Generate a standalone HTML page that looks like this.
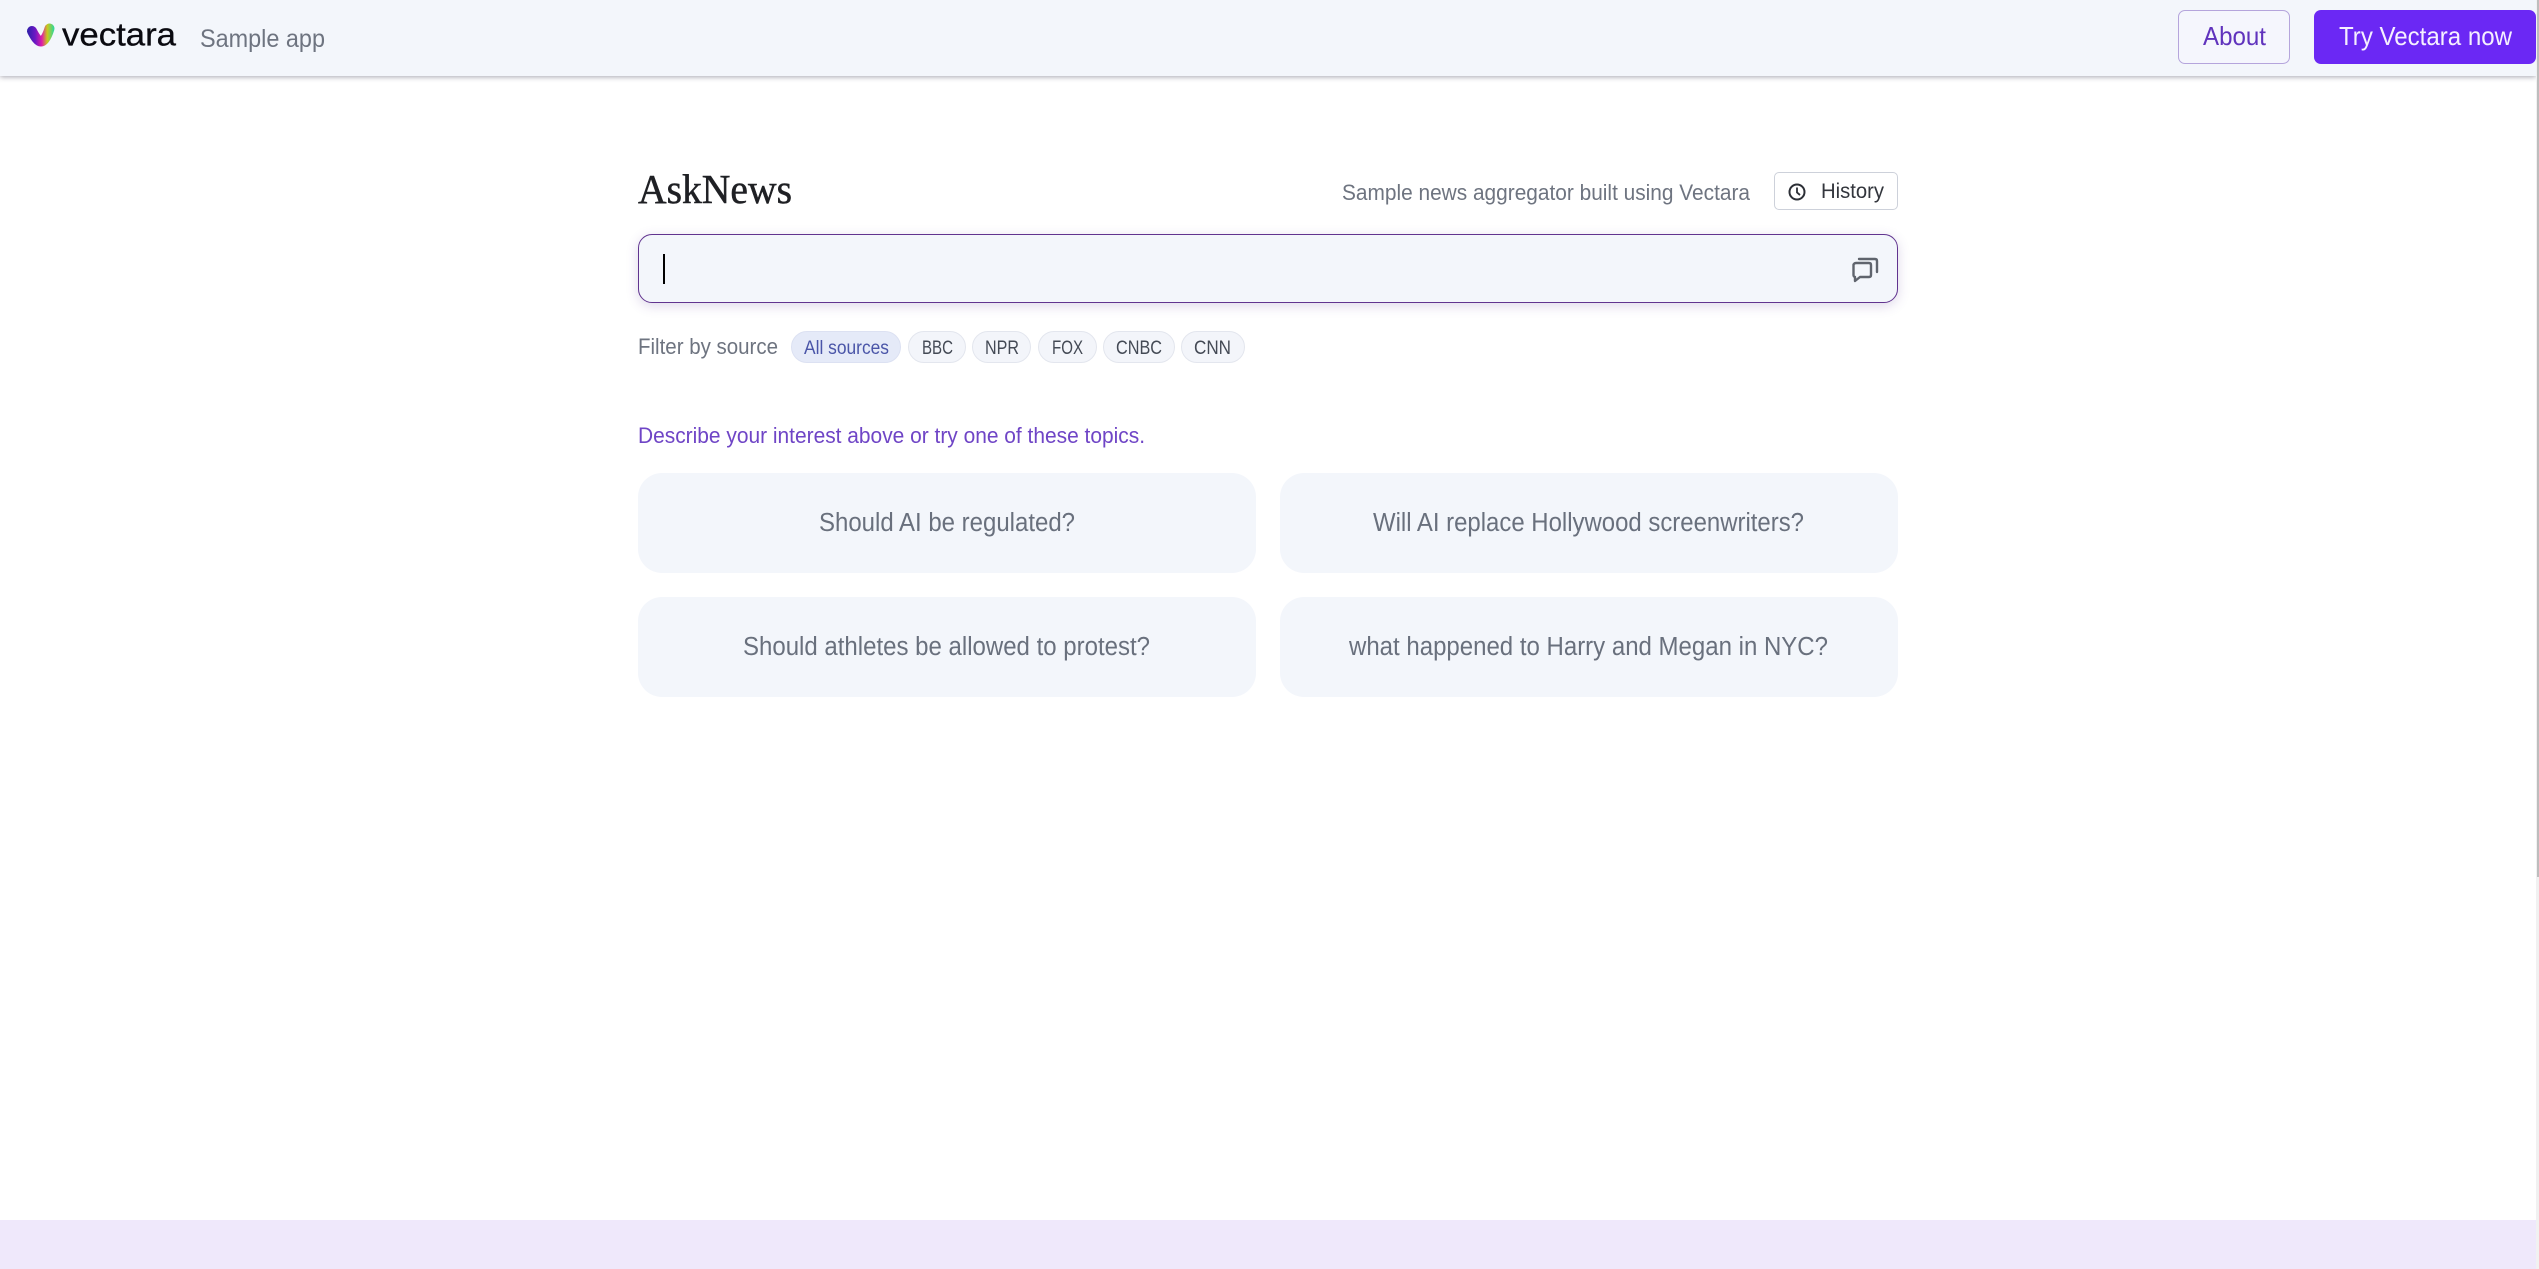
<!DOCTYPE html>
<html lang="en">
<head>
<meta charset="utf-8">
<title>AskNews</title>
<style>
html,body{margin:0;padding:0;width:2539px;height:1269px;overflow:hidden;background:#fff}
.b{position:absolute;box-sizing:border-box}
svg{position:absolute;left:0;top:0}
text{font-family:"Liberation Sans",Arial,sans-serif}
</style>
</head>
<body>
<div class="b" style="left:0;top:0;width:2536px;height:76px;background:#f3f6fb;box-shadow:0 1px 5px rgba(60,60,80,.45)"></div>
<div class="b" style="left:0;top:1220px;width:2536px;height:49px;background:#efe8fb"></div>
<div class="b" style="left:2536px;top:0;width:3px;height:1269px;background:#f1f1f1"></div>
<div class="b" style="left:2537px;top:0;width:2px;height:877px;background:#bdbdbd"></div>

<div class="b" style="left:2178px;top:10px;width:112px;height:54px;background:#f5f6fd;border:1px solid #b5a5dc;border-radius:7px"></div>
<div class="b" style="left:2314px;top:10px;width:222px;height:54px;background:#6b28f4;border-radius:7px"></div>

<div class="b" style="left:1774px;top:172px;width:124px;height:38px;background:#fff;border:1px solid #cdd1da;border-radius:5px"></div>
<div class="b" style="left:638px;top:234px;width:1260px;height:69px;background:#f3f6fb;border:1px solid #61348f;border-radius:14px;box-shadow:0 3px 12px rgba(90,60,150,.2)"></div>
<div class="b" style="left:663px;top:254px;width:2px;height:30px;background:#000"></div>

<div class="b" style="left:791px;top:331px;width:110px;height:32px;background:#e5eaf8;border:1px solid #dce1f2;border-radius:16px"></div>
<div class="b" style="left:908px;top:331px;width:58px;height:32px;background:#f3f5fa;border:1px solid #e3e6ee;border-radius:16px"></div>
<div class="b" style="left:972px;top:331px;width:59px;height:32px;background:#f3f5fa;border:1px solid #e3e6ee;border-radius:16px"></div>
<div class="b" style="left:1038px;top:331px;width:59px;height:32px;background:#f3f5fa;border:1px solid #e3e6ee;border-radius:16px"></div>
<div class="b" style="left:1103px;top:331px;width:72px;height:32px;background:#f3f5fa;border:1px solid #e3e6ee;border-radius:16px"></div>
<div class="b" style="left:1181px;top:331px;width:64px;height:32px;background:#f3f5fa;border:1px solid #e3e6ee;border-radius:16px"></div>

<div class="b" style="left:638px;top:473px;width:618px;height:100px;background:#f3f6fb;border-radius:24px"></div>
<div class="b" style="left:1280px;top:473px;width:618px;height:100px;background:#f3f6fb;border-radius:24px"></div>
<div class="b" style="left:638px;top:597px;width:618px;height:100px;background:#f3f6fb;border-radius:24px"></div>
<div class="b" style="left:1280px;top:597px;width:618px;height:100px;background:#f3f6fb;border-radius:24px"></div>

<svg width="2539" height="1269" viewBox="0 0 2539 1269" xmlns="http://www.w3.org/2000/svg">
<defs>
<linearGradient id="lg" x1="27" y1="30" x2="54" y2="30" gradientUnits="userSpaceOnUse">
<stop offset="0" stop-color="#2c1fa8"/>
<stop offset=".3" stop-color="#6a18c4"/>
<stop offset=".55" stop-color="#e01ca8"/>
<stop offset=".75" stop-color="#c8c81c"/>
<stop offset="1" stop-color="#2fd89a"/>
</linearGradient>
</defs>
<path d="M32 31C35 37 38 41.500 41 41.500C44.500 41.500 47.500 35 49.500 28.500" fill="none" stroke="url(#lg)" stroke-width="10" stroke-linecap="round"/>
<text x="62" y="45.500" font-size="32" fill="#0a0a10" stroke="#0a0a10" stroke-width=".3" textLength="114" lengthAdjust="spacingAndGlyphs">vectara</text>
<text x="200" y="47" font-size="25" fill="#6e7480" textLength="125" lengthAdjust="spacingAndGlyphs">Sample app</text>
<text x="2203" y="45" font-size="26" fill="#6033bd" textLength="63" lengthAdjust="spacingAndGlyphs">About</text>
<text x="2339" y="45" font-size="26" fill="#f5efff" textLength="173" lengthAdjust="spacingAndGlyphs">Try Vectara now</text>

<text x="638" y="203" font-size="41" fill="#1f2024" stroke="#1f2024" stroke-width=".5" style="font-family:'Liberation Serif',serif" textLength="154" lengthAdjust="spacingAndGlyphs">AskNews</text>
<text x="1342" y="200" font-size="22" fill="#6e7480" textLength="408" lengthAdjust="spacingAndGlyphs">Sample news aggregator built using Vectara</text>
<circle cx="1797" cy="192" r="7.500" fill="none" stroke="#2c2f36" stroke-width="2"/>
<path d="M1797 187.500V192.500L1800 195" fill="none" stroke="#2c2f36" stroke-width="1.800"/>
<text x="1821" y="198" font-size="21" fill="#33363d" textLength="63" lengthAdjust="spacingAndGlyphs">History</text>

<path d="M1856 263H1869C1870.500 263 1871 264 1871 265V275C1871 276 1870.500 277 1869 277H1860L1855 281V277C1854 277 1853.500 276 1853.500 275V265C1853.500 264 1854.500 263 1856 263Z" fill="none" stroke="#5f646d" stroke-width="2.400" stroke-linejoin="round"/>
<path d="M1859 259H1875C1876.500 259 1877 260 1877 261V272" fill="none" stroke="#5f646d" stroke-width="2.400" stroke-linecap="round"/>

<text x="638" y="354" font-size="22" fill="#6e7480" textLength="140" lengthAdjust="spacingAndGlyphs">Filter by source</text>
<text x="804" y="354" font-size="19" fill="#4a55a8" textLength="85" lengthAdjust="spacingAndGlyphs">All sources</text>
<text x="922" y="354" font-size="19" fill="#444a55" textLength="31" lengthAdjust="spacingAndGlyphs">BBC</text>
<text x="985" y="354" font-size="19" fill="#444a55" textLength="34" lengthAdjust="spacingAndGlyphs">NPR</text>
<text x="1052" y="354" font-size="19" fill="#444a55" textLength="31" lengthAdjust="spacingAndGlyphs">FOX</text>
<text x="1116" y="354" font-size="19" fill="#444a55" textLength="46" lengthAdjust="spacingAndGlyphs">CNBC</text>
<text x="1194" y="354" font-size="19" fill="#444a55" textLength="37" lengthAdjust="spacingAndGlyphs">CNN</text>

<text x="638" y="443" font-size="22" fill="#6f45c6" textLength="507" lengthAdjust="spacingAndGlyphs">Describe your interest above or try one of these topics.</text>

<text x="819" y="531" font-size="25.500" fill="#69707d" textLength="256" lengthAdjust="spacingAndGlyphs">Should AI be regulated?</text>
<text x="1373" y="531" font-size="25.500" fill="#69707d" textLength="431" lengthAdjust="spacingAndGlyphs">Will AI replace Hollywood screenwriters?</text>
<text x="743" y="655" font-size="25.500" fill="#69707d" textLength="407" lengthAdjust="spacingAndGlyphs">Should athletes be allowed to protest?</text>
<text x="1349" y="655" font-size="25.500" fill="#69707d" textLength="479" lengthAdjust="spacingAndGlyphs">what happened to Harry and Megan in NYC?</text>
</svg>
</body>
</html>
